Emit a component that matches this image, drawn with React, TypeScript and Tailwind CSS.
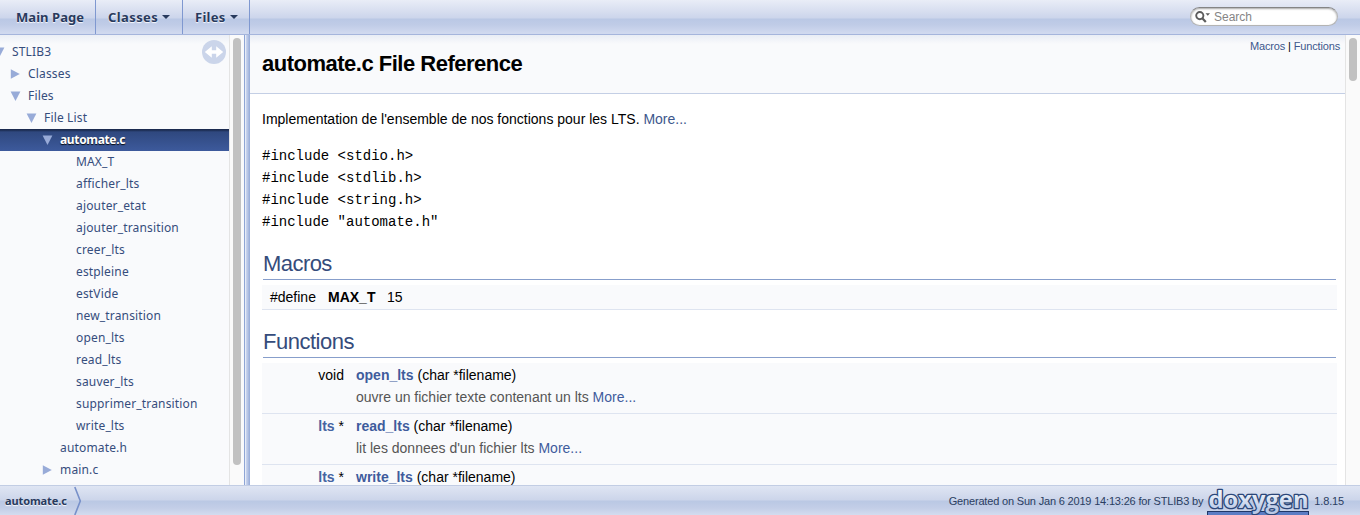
import React from "react";

type TreeRow = {
  label: string;
  indent: string;
  arrow?: "open" | "closed";
  selected?: boolean;
};

const child = "pl-[76px]";

const rows: TreeRow[] = [
  { label: "STLIB3", indent: "pl-[12px]", arrow: "open" },
  { label: "Classes", indent: "pl-[28px]", arrow: "closed" },
  { label: "Files", indent: "pl-[28px]", arrow: "open" },
  { label: "File List", indent: "pl-[44px]", arrow: "open" },
  { label: "automate.c", indent: "pl-[60px]", arrow: "open", selected: true },
  { label: "MAX_T", indent: child },
  { label: "afficher_lts", indent: child },
  { label: "ajouter_etat", indent: child },
  { label: "ajouter_transition", indent: child },
  { label: "creer_lts", indent: child },
  { label: "estpleine", indent: child },
  { label: "estVide", indent: child },
  { label: "new_transition", indent: child },
  { label: "open_lts", indent: child },
  { label: "read_lts", indent: child },
  { label: "sauver_lts", indent: child },
  { label: "supprimer_transition", indent: child },
  { label: "write_lts", indent: child },
  { label: "automate.h", indent: "pl-[60px]" },
  { label: "main.c", indent: "pl-[60px]", arrow: "closed" },
];

type Fn = { type: string; name: string; desc?: string };

const functions: Fn[] = [
  { type: "void", name: "open_lts", desc: "ouvre un fichier texte contenant un lts" },
  { type: "lts", name: "read_lts", desc: "lit les donnees d'un fichier lts" },
  { type: "lts", name: "write_lts" },
];

function Arrow({ kind }: { kind: "open" | "closed" }) {
  return (
    <svg className="-ml-[18px] mr-[7px] h-[11px] w-[11px] shrink-0" viewBox="0 0 11 11">
      <path d={kind === "open" ? "M0.6 0.5H10.4L5.5 10Z" : "M0.8 0.3V9.7L9.8 5Z"} fill="#98abd8" />
    </svg>
  );
}

function NavItem({ label, caret, className }: { label: string; caret?: boolean; className: string }) {
  return (
    <div className={"flex h-full items-center border-r border-[#7f98d0] pt-px text-[13px] font-bold text-[#283a5d] [text-shadow:0_1px_1px_rgba(255,255,255,0.9)] " + className}>
      <span>{label}</span>
      {caret && (
        <svg className="mb-[2px] ml-[4px] h-[4px] w-[8px]" viewBox="0 0 8 4">
          <path d="M0 0H8L4 4Z" fill="#283a5d" />
        </svg>
      )}
    </div>
  );
}

function TopNav() {
  return (
    <nav className="flex h-[35px] shrink-0 items-stretch justify-between border-b border-[#a5b5dc] bg-[linear-gradient(#e9edf7_0px,#d6ddef_12px,#ccd5eb_18px,#bac8e5_19px,#c0cce7_25px,#d0d9ef_33px)] font-['Noto_Sans','Open_Sans',sans-serif]">
      <div className="flex">
        <NavItem label="Main Page" className="w-[96px] pl-[16px] tracking-[0.05px]" />
        <NavItem label="Classes" caret className="w-[87px] pl-[12px] tracking-[0.4px]" />
        <NavItem label="Files" caret className="w-[67px] pl-[12px] tracking-[0.3px]" />
      </div>
      <div className="mr-[22px] mt-[7px] flex h-[19px] w-[148px] items-center rounded-full border border-[#b4b4b4] border-t-[#858585] bg-white pl-[4px] shadow-[inset_0_1px_2px_rgba(0,0,0,0.35)]">
        <svg className="h-[12px] w-[16px]" viewBox="0 0 16 12">
          <circle cx="4.8" cy="4.6" r="3.6" fill="none" stroke="#5c5c5c" strokeWidth="1.9" />
          <path d="M7.3 7.2L10.8 10.9" stroke="#5c5c5c" strokeWidth="2.2" />
          <path d="M10.5 2.3H15L12.75 4.8Z" fill="#5c5c5c" />
        </svg>
        <span className="ml-[3px] pt-px font-['Liberation_Sans',sans-serif] text-[12px] leading-[17px] text-[#858585]">Search</span>
      </div>
    </nav>
  );
}

function Sidebar() {
  return (
    <aside className="flex w-[250px] shrink-0">
      <div className="relative w-[229px] overflow-hidden bg-[linear-gradient(#ebeff6_0px,#f9fafc_9px)] pt-[6px] font-['Noto_Sans','Open_Sans',sans-serif] text-[12px] tracking-[0.16px]">
        {rows.map((row) => (
          <div
            key={row.label}
            className={
              "flex h-[22px] items-center whitespace-nowrap " +
              row.indent +
              (row.selected
                ? " bg-[linear-gradient(#1b2b50_0px,#1b2b50_1px,#2f487f_3px,#3d5a9c_22px)] font-bold tracking-[-0.35px] text-white [text-shadow:0_1px_1px_rgba(0,0,0,0.9)]"
                : " text-[#364d7c]")
            }
          >
            {row.arrow && <Arrow kind={row.arrow} />}
            <span>{row.label}</span>
          </div>
        ))}
        <svg className="absolute right-[3px] top-[5px] h-[24px] w-[24px]" viewBox="0 0 24 24">
          <circle cx="12" cy="12" r="12" fill="#cbd5ea" />
          <path d="M2.8 12L9.8 6.3V10.2H14.2V6.3L21.2 12L14.2 17.7V13.8H9.8V17.7Z" fill="#fff" />
        </svg>
      </div>
      <div className="flex w-[14px] justify-center border-l border-[#e4e4e4] bg-[#fafafa] pl-px pt-[3px]">
        <div className="h-[427px] w-[8px] rounded-full bg-[#c1c1c1]" />
      </div>
      <div className="w-[7px] bg-[linear-gradient(90deg,#f8f9fd_0px,#f8f9fd_1px,#8ea5d5_1px,#8ea5d5_2px,#e7ecf7_2px,#e7ecf7_3px,#ccd7ef_3px,#b2c1e3_5px,#94aad8_7px)]" />
    </aside>
  );
}

function SectionHeading({ children, className }: { children: React.ReactNode; className: string }) {
  return (
    <h2 className={"ml-px h-[30px] w-[1073px] border-b border-[#879ecb] text-[22px] leading-[27px] text-[#354c7b] " + className}>
      {children}
    </h2>
  );
}

function Main() {
  return (
    <main className="flex min-w-0 flex-1 bg-white font-['Liberation_Sans',Arial,sans-serif] text-[14px] leading-[22px] text-black">
      <div className="w-[1095px] overflow-hidden">
        <header className="flex h-[59px] justify-between border-b border-[#c4cfe5] bg-[linear-gradient(#e9edf5_0px,#f9fafc_9px)] pl-[12px] pr-[5px]">
          <h1 className="pt-[16px] text-[22px] font-bold leading-[25px] tracking-[-0.5px]">automate.c File Reference</h1>
          <div className="pt-[4px] text-[11px] leading-[15px] tracking-[-0.15px]">
            <a className="text-[#3d578c]">Macros</a> | <a className="text-[#3d578c]">Functions</a>
          </div>
        </header>
        <div className="pl-[12px] pr-[8px]">
          <p className="mt-[14px] h-[22px]">
            Implementation de l'ensemble de nos fonctions pour les LTS. <a className="text-[#3d578c]">More...</a>
          </p>
          <div className="mt-[15px] whitespace-pre font-['Liberation_Mono',monospace]">
            <div>{"#include <stdio.h>"}</div>
            <div>{"#include <stdlib.h>"}</div>
            <div>{"#include <string.h>"}</div>
            <div>{'#include "automate.h"'}</div>
          </div>
          <div className="mt-[17px]">
            <SectionHeading className="tracking-[-0.55px]">Macros</SectionHeading>
            <div className="mt-[5px] flex h-[25px] border-b border-[#dee4f0] bg-[#f9fafc] pl-[8px] pt-px">
              <span className="w-[58px]">#define</span>
              <b className="w-[59px]">MAX_T</b>
              <span>15</span>
            </div>
          </div>
          <div className="mt-[18px]">
            <SectionHeading className="tracking-[-0.48px]">Functions</SectionHeading>
            <div className="mt-[5px]">
              {functions.map((fn) => (
                <div key={fn.name} className="flex h-[51px] border-b border-[#dee4f0] bg-[#f9fafc] pt-px">
                  <div className="w-[82px] text-right">
                    {fn.type === "void" ? "void" : (
                      <>
                        <a className="font-bold text-[#4665a2]">{fn.type}</a> *
                      </>
                    )}
                  </div>
                  <div className="ml-[12px]">
                    <div>
                      <a className="font-bold text-[#3f5c9c]">{fn.name}</a> (char *filename)
                    </div>
                    {fn.desc && (
                      <div className="text-[#555]">
                        {fn.desc} <a className="text-[#3f5c9c]">More...</a>
                      </div>
                    )}
                  </div>
                </div>
              ))}
            </div>
          </div>
        </div>
      </div>
      <div className="flex w-[15px] justify-center border-l border-[#e4e4e4] bg-[#fafafa] pt-[3px]">
        <div className="h-[43px] w-[8px] rounded-full bg-[#c1c1c1]" />
      </div>
    </main>
  );
}

function Logo() {
  return (
    <svg className="ml-[2px] h-[29px] w-[106px]" viewBox="0 0 106 29">
      <defs>
        <linearGradient id="logo-fill" x1="0" y1="0" x2="0" y2="1">
          <stop offset="0.25" stopColor="#f4f7fc" />
          <stop offset="0.85" stopColor="#b9c8e6" />
        </linearGradient>
      </defs>
      <rect x="2.5" y="25.5" width="101" height="4" fill="#5b7cc4" stroke="#1f3768" />
      <text
        x="3.5"
        y="22"
        textLength="100"
        lengthAdjust="spacingAndGlyphs"
        fontFamily="Open Sans, Noto Sans, sans-serif"
        fontSize="23"
        fontWeight="700"
        fill="url(#logo-fill)"
        stroke="#2c4678"
        strokeWidth="2.6"
        paintOrder="stroke"
        strokeLinejoin="round"
      >
        doxygen
      </text>
    </svg>
  );
}

function Footer() {
  return (
    <footer className="flex h-[30px] shrink-0 items-stretch justify-between border-t border-[#c2cde4] bg-[linear-gradient(#dfe5f3_0px,#ccd5ea_14px,#bac8e4_15px,#c3cee7_22px,#d3dcef_29px)]">
      <div className="flex font-['Noto_Sans','Open_Sans',sans-serif] text-[11px] font-bold text-[#283a5d]">
        <span className="w-[74px] pl-[5px] leading-[29px] tracking-[-0.1px] [text-shadow:0_1px_1px_rgba(255,255,255,0.9)]">automate.c</span>
        <svg className="h-[29px] w-[8px]" viewBox="0 0 8 29">
          <path d="M0.8 1L6.3 15L0.8 29" fill="none" stroke="#7790c9" strokeWidth="1.6" />
        </svg>
      </div>
      <div className="flex pr-[16px] font-['Liberation_Sans',Arial,sans-serif] text-[11px] leading-[30px] text-[#2a3d61]">
        <span className="tracking-[-0.18px]">Generated on Sun Jan 6 2019 14:13:26 for STLIB3 by</span>
        <Logo />
        <span className="ml-[3px] tracking-[-0.15px]">1.8.15</span>
      </div>
    </footer>
  );
}

export default function App() {
  return (
    <div className="flex h-[515px] w-[1360px] flex-col overflow-hidden bg-white">
      <TopNav />
      <div className="flex min-h-0 flex-1">
        <Sidebar />
        <Main />
      </div>
      <Footer />
    </div>
  );
}
